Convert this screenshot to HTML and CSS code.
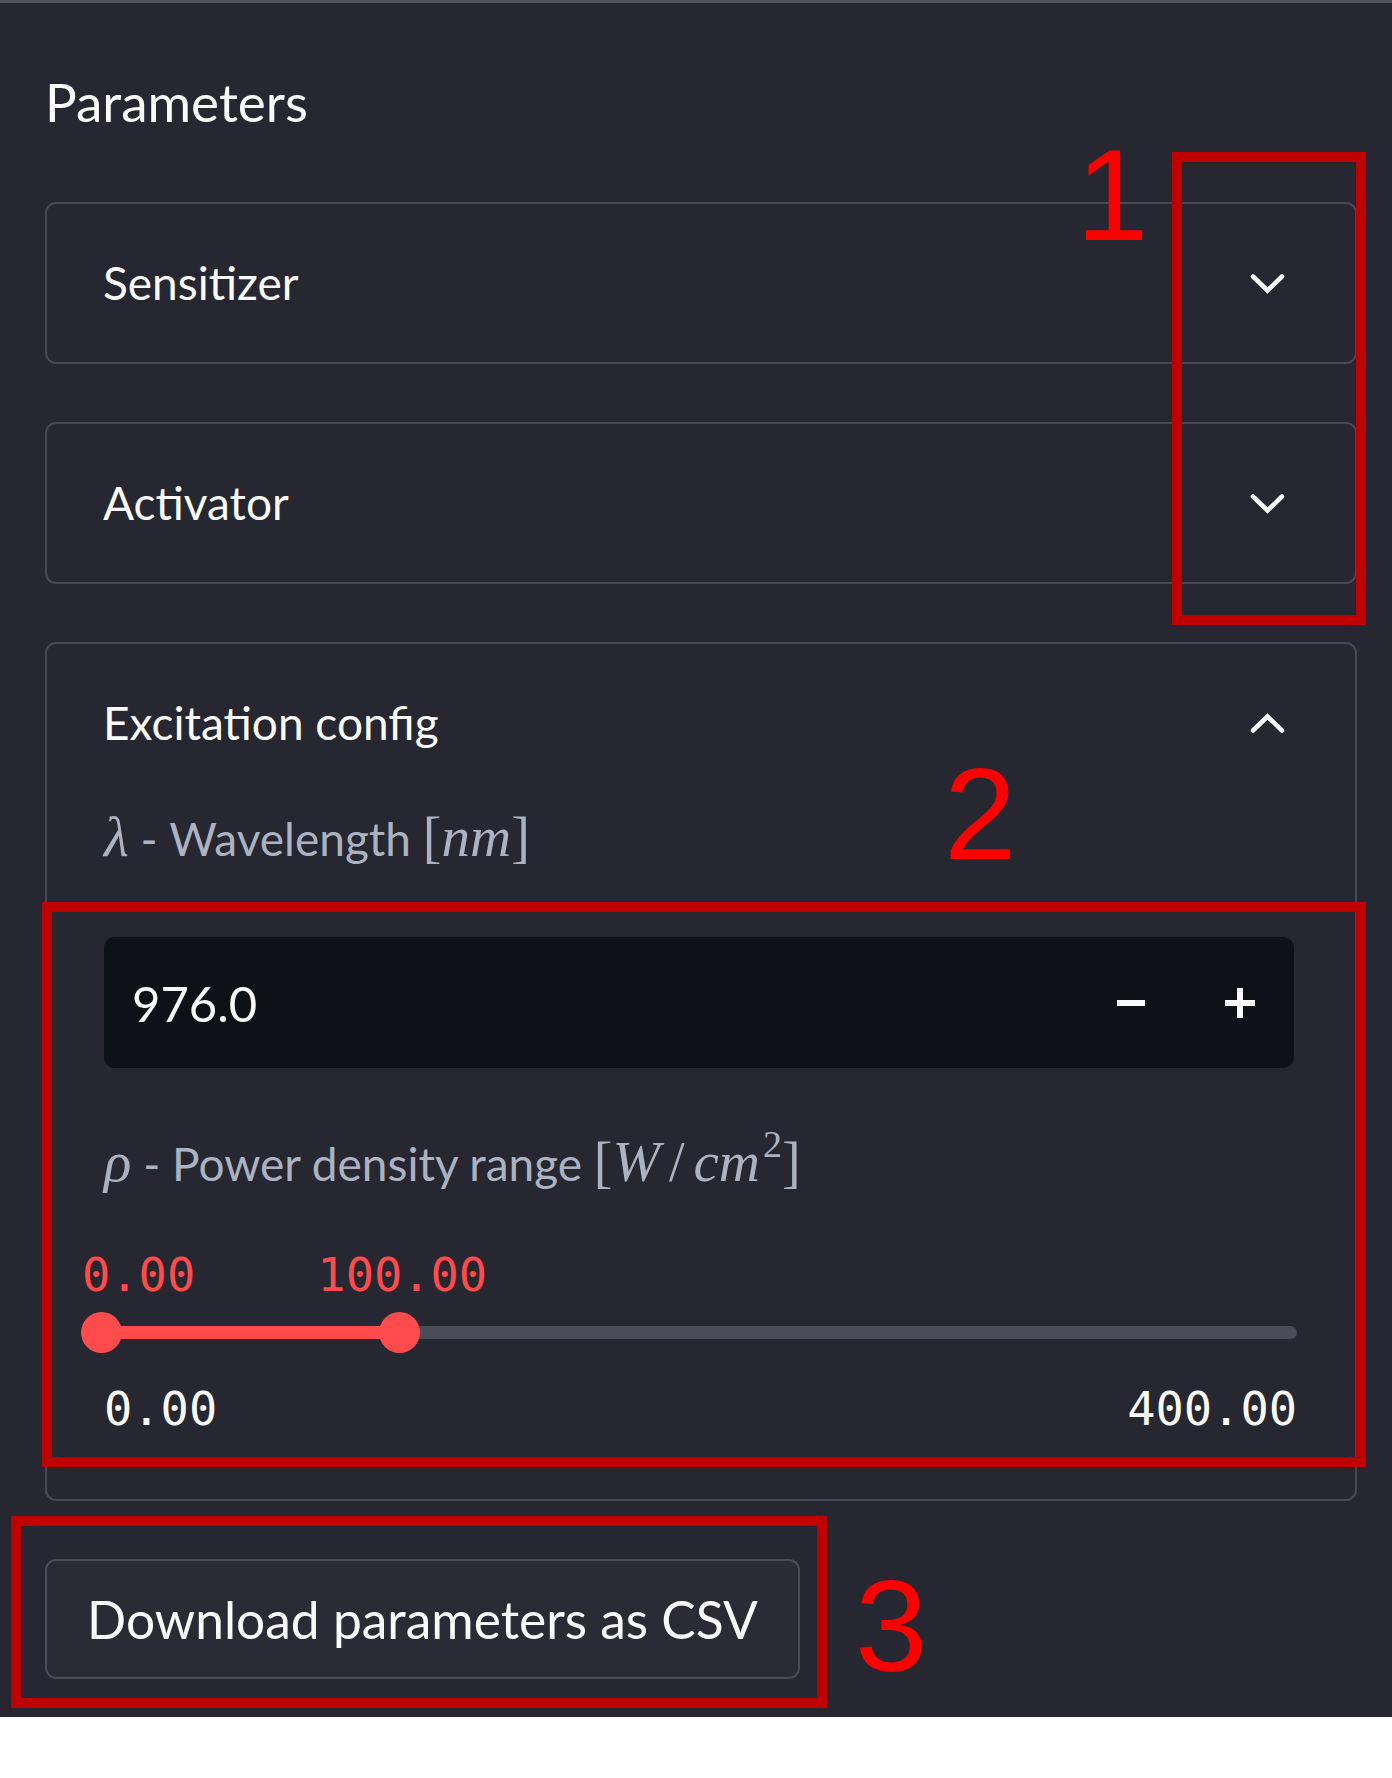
FILE: index.html
```html
<!DOCTYPE html>
<html lang="en">
<head>
<meta charset="utf-8">
<title>Parameters</title>
<link rel="stylesheet" href="styles.css">
</head>
<body>
<div class="sidebar">
  <h2 class="title">Parameters</h2>

  <div class="expander">
    <div class="exp-head">
      <span class="exp-title">Sensitizer</span>
      <svg class="chev" width="35" height="21" viewBox="0 0 35 21"><polyline points="3,3.5 17.5,17.5 32,3.5" fill="none" stroke="#fafafa" stroke-width="4.6" stroke-linecap="round" stroke-linejoin="miter"/></svg>
    </div>
  </div>

  <div class="expander">
    <div class="exp-head">
      <span class="exp-title">Activator</span>
      <svg class="chev" width="35" height="21" viewBox="0 0 35 21"><polyline points="3,3.5 17.5,17.5 32,3.5" fill="none" stroke="#fafafa" stroke-width="4.6" stroke-linecap="round" stroke-linejoin="miter"/></svg>
    </div>
  </div>

  <div class="expander">
    <div class="exp-head">
      <span class="exp-title">Excitation config</span>
      <svg class="chev" width="35" height="21" viewBox="0 0 35 21"><polyline points="3,17.5 17.5,3.5 32,17.5" fill="none" stroke="#fafafa" stroke-width="4.6" stroke-linecap="round" stroke-linejoin="miter"/></svg>
    </div>
    <div class="exp-body">
      <div class="label label-wl"><span class="math">λ</span> - Wavelength <span class="mbr">[</span><span class="math">nm</span><span class="mbr">]</span></div>
      <div class="numinput">
        <span class="num-val">976.0</span>
        <div class="step">
          <svg width="28" height="6" viewBox="0 0 28 6"><rect x="0" y="0" width="28" height="6" fill="#fafafa"/></svg>
        </div>
        <div class="step">
          <svg width="30" height="30" viewBox="0 0 30 30"><rect x="0" y="12" width="30" height="6" fill="#fafafa"/><rect x="12" y="0" width="6" height="30" fill="#fafafa"/></svg>
        </div>
      </div>
      <div class="label label-pd"><span class="math">ρ</span> - Power density range <span class="mbr">[</span><span class="math">W</span><span class="mbr slash">/</span><span class="math">cm</span><sup class="msup">2</sup><span class="mbr">]</span></div>
      <div class="slider">
        <div class="thumb-vals">
          <span class="tv tv-first" style="left:0%">0.00</span>
          <span class="tv tv-mid" style="left:25%">100.00</span>
        </div>
        <div class="track-wrap">
          <div class="track"><div class="fill" style="left:0%;width:25%"></div></div>
          <span class="thumb" style="left:0%"></span>
          <span class="thumb" style="left:25%"></span>
        </div>
        <div class="minmax"><span>0.00</span><span>400.00</span></div>
      </div>
    </div>
  </div>

  <button class="dl">Download parameters as CSV</button>

  <div class="anno-rect r1"></div>
  <div class="anno-rect r2"></div>
  <div class="anno-rect r3"></div>
  <span class="anno-num n1">1</span>
  <span class="anno-num n2">2</span>
  <span class="anno-num n3">3</span>
</div>
</body>
</html>
```

FILE: styles.css
```css
html, body {
  margin: 0;
  padding: 0;
  background: #ffffff;
}

.sidebar {
  position: relative;
  box-sizing: border-box;
  width: 1392px;
  height: 1717px;
  background: #262730;
  border-top: 3px solid #50515b;
  padding: 69px 35px 0 45px;
  display: flex;
  flex-direction: column;
  align-items: flex-start;
  font-family: Lato, "Liberation Sans", sans-serif;
  color: #fafafa;
}

.title {
  margin: 0 0 70px 0;
  font-size: 53px;
  line-height: 60px;
  font-weight: 400;
  color: #fafafa;
}

.expander {
  box-sizing: border-box;
  width: 100%;
  border: 2px solid #474953;
  border-radius: 11px;
  margin-bottom: 58px;
}

.exp-head {
  height: 158px;
  display: flex;
  align-items: center;
  justify-content: space-between;
  padding: 0 70px 0 56px;
}

.exp-title {
  font-size: 46px;
  line-height: 60px;
}

.chev {
  display: block;
}

.exp-body {
  padding: 0 61px 65px 57px;
}

.label {
  height: 60px;
  font-size: 46px;
  line-height: 60px;
  color: #abb2c2;
  white-space: nowrap;
}

.label-wl {
  margin-top: 7px;
}

.label-pd {
  margin-top: 66px;
}

.math {
  font-family: "Liberation Serif", "DejaVu Serif", serif;
  font-style: italic;
  font-size: 57px;
  line-height: 0;
}

.mbr {
  font-family: "Liberation Serif", "DejaVu Serif", serif;
  font-size: 56px;
  line-height: 0;
}

.slash {
  padding: 0 9px;
}

.msup {
  font-family: "Liberation Serif", "DejaVu Serif", serif;
  font-size: 38px;
  line-height: 0;
  vertical-align: 24px;
  padding-left: 3px;
}

.numinput {
  margin-top: 68px;
  height: 131px;
  background: #0e1117;
  border-radius: 11px;
  display: flex;
  align-items: center;
}

.num-val {
  flex: 1;
  padding-left: 28px;
  font-size: 49px;
  line-height: 60px;
  color: #fafafa;
}

.step {
  width: 109px;
  height: 100%;
  display: flex;
  align-items: center;
  justify-content: center;
}

.step svg {
  display: block;
}

.slider {
  margin-top: 56px;
  margin-right: -3px;
  font-family: "DejaVu Sans Mono", "Liberation Mono", monospace;
  font-size: 47px;
}

.thumb-vals {
  position: relative;
  height: 50px;
  line-height: 50px;
  color: #ff4b4b;
}

.tv {
  position: absolute;
  top: 0;
  white-space: nowrap;
}

.tv-first {
  transform: translateX(-22px);
}

.tv-mid {
  transform: translateX(-50%);
}

.track-wrap {
  position: relative;
  height: 41px;
  margin-top: 12px;
}

.track {
  position: absolute;
  left: -3px;
  right: 0;
  top: 14px;
  height: 13px;
  border-radius: 7px;
  background: #4a4c57;
}

.fill {
  position: absolute;
  top: 0;
  bottom: 0;
  background: #ff4b4b;
}

.thumb {
  position: absolute;
  top: 0;
  width: 41px;
  height: 41px;
  margin-left: -23px;
  border-radius: 50%;
  background: #ff4b4b;
}

.minmax {
  margin-top: 31px;
  height: 50px;
  line-height: 50px;
  display: flex;
  justify-content: space-between;
  color: #fafafa;
}

.dl {
  box-sizing: border-box;
  width: 755px;
  height: 120px;
  margin: 0;
  padding: 0;
  background: #2a2b35;
  border: 2px solid #4a4c56;
  border-radius: 11px;
  color: #fafafa;
  font-family: Lato, "Liberation Sans", sans-serif;
  font-size: 51.5px;
  line-height: 60px;
  text-align: center;
}

.anno-rect {
  position: absolute;
  box-sizing: border-box;
  border: 10px solid #c00000;
}

.r1 {
  left: 1172px;
  top: 149px;
  width: 194px;
  height: 473px;
}

.r2 {
  left: 42px;
  top: 899px;
  width: 1324px;
  height: 565px;
}

.r3 {
  left: 11px;
  top: 1513px;
  width: 816px;
  height: 192px;
}

.anno-num {
  position: absolute;
  font-family: "Liberation Sans", Arial, sans-serif;
  font-size: 130px;
  line-height: 130px;
  color: #ff0000;
}

.n1 {
  left: 1076px;
  top: 127px;
}

.n2 {
  left: 944px;
  top: 746px;
}

.n3 {
  left: 855px;
  top: 1558px;
}
```
